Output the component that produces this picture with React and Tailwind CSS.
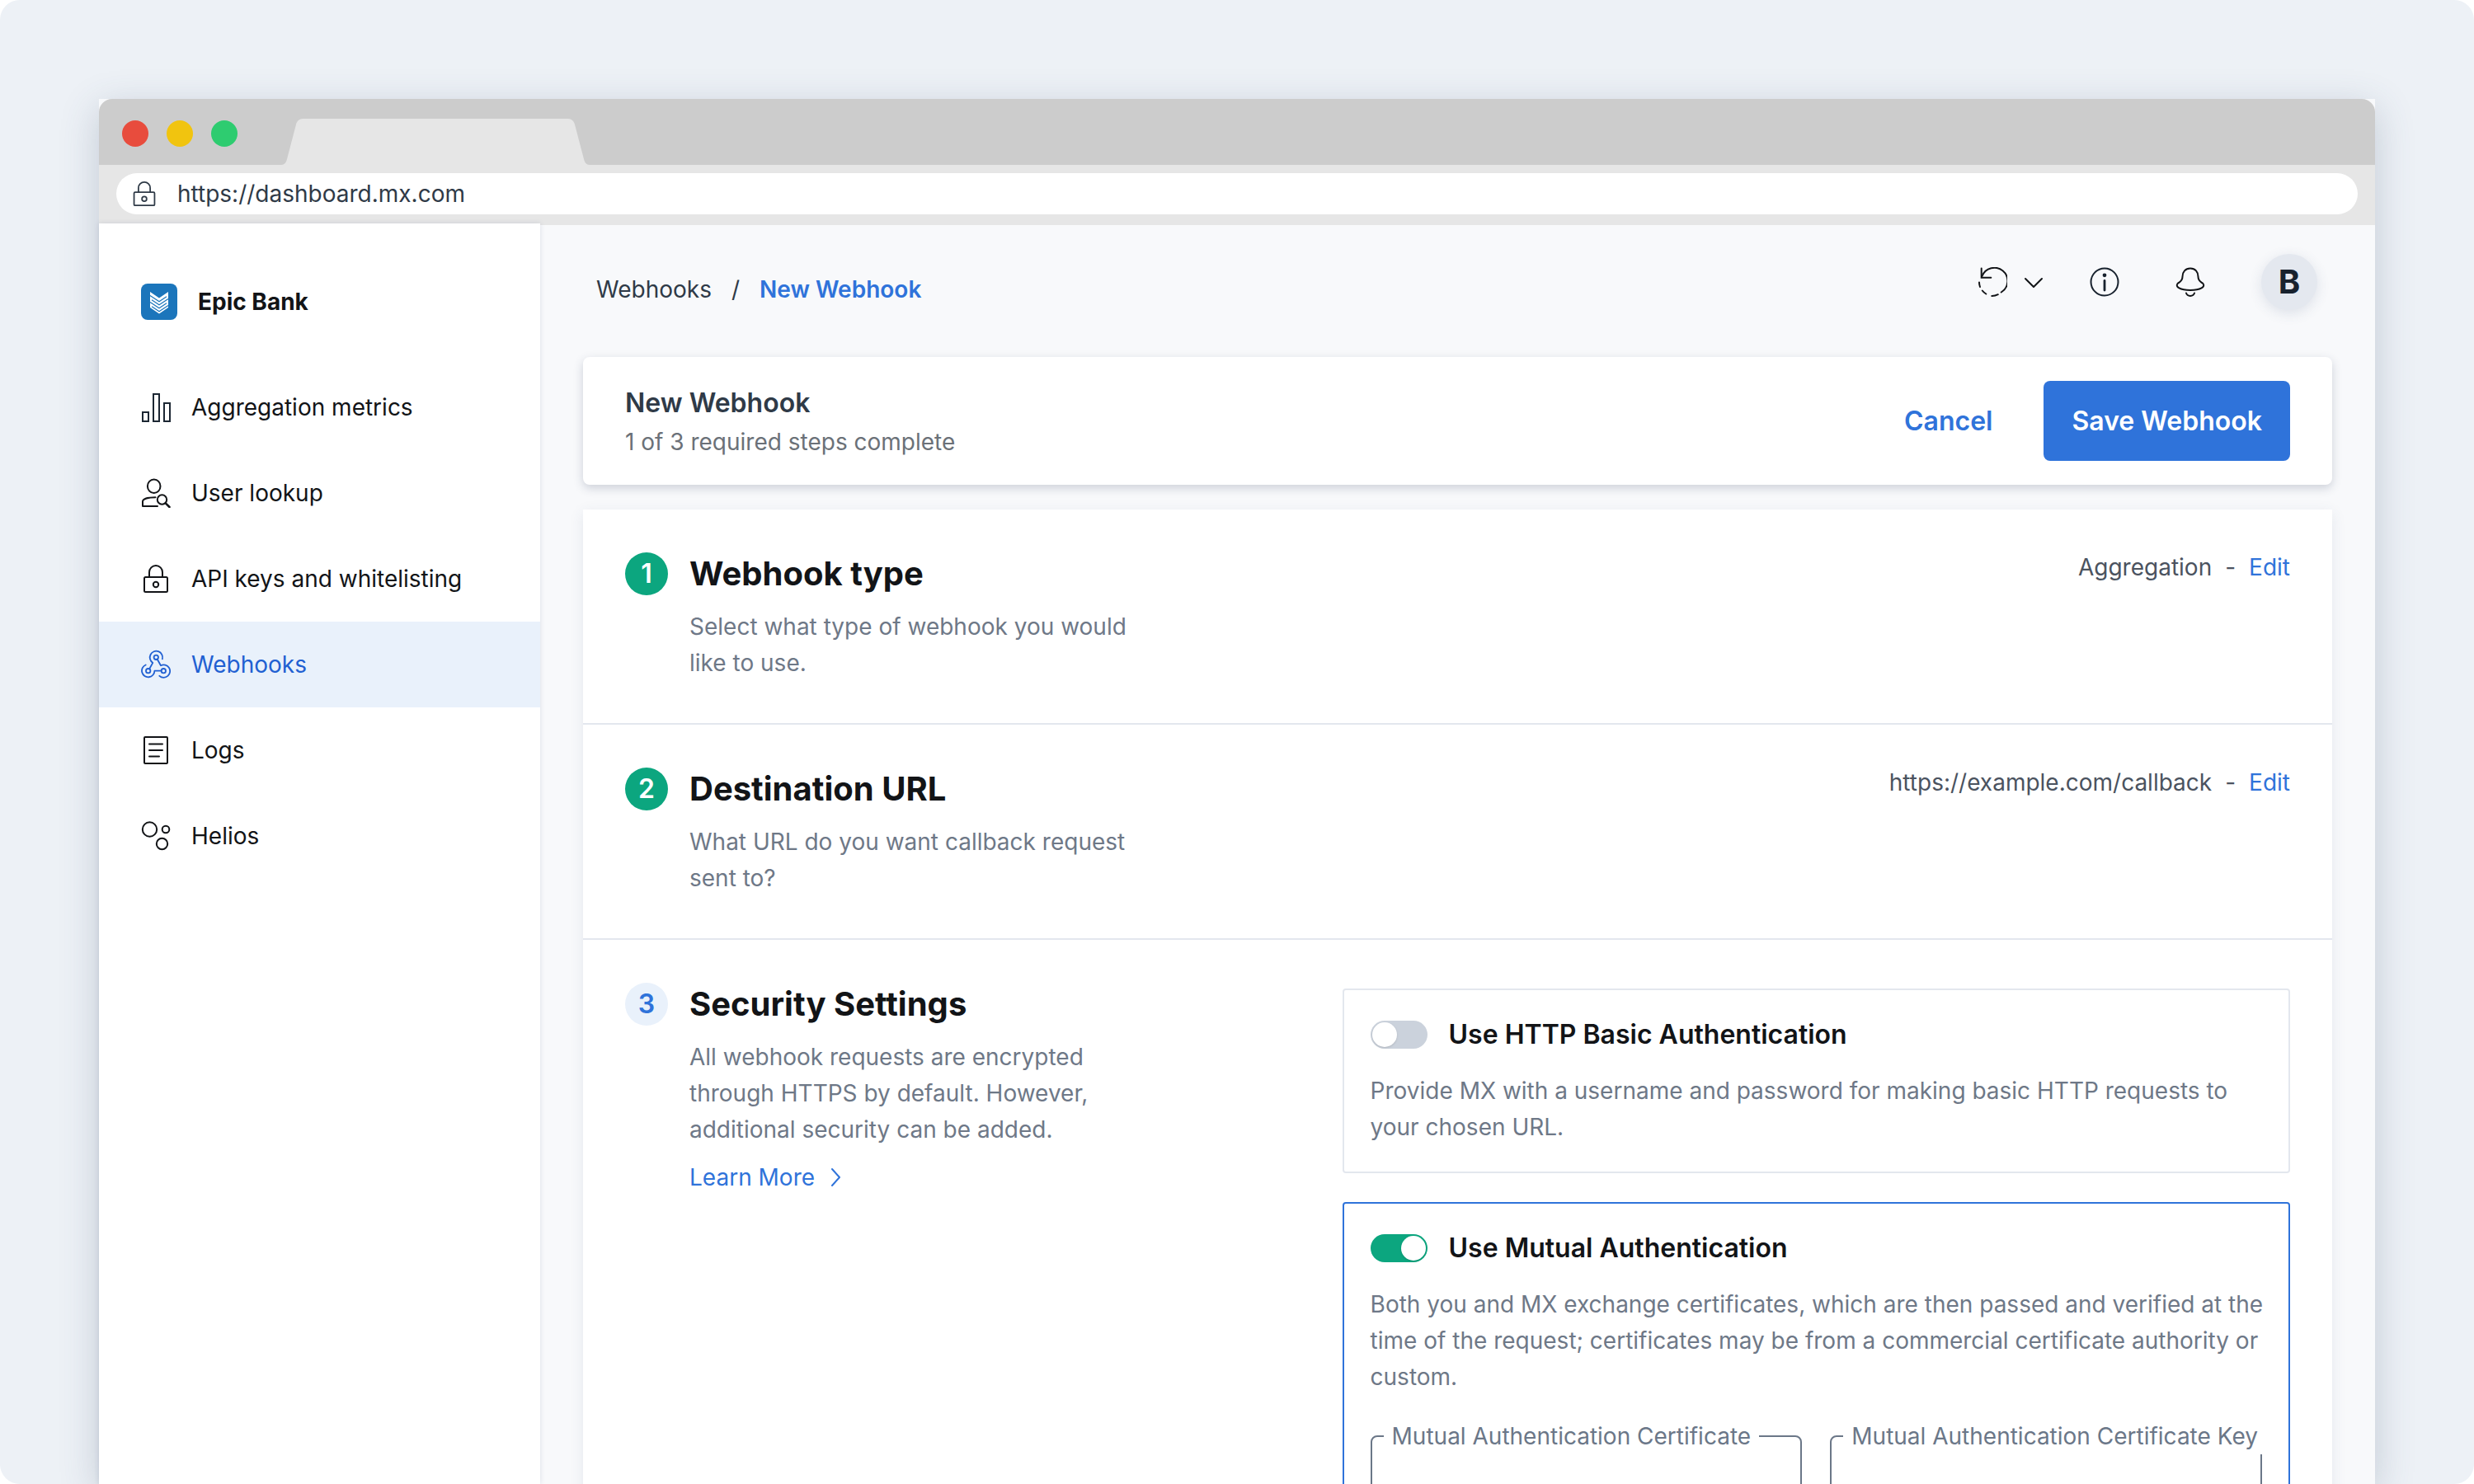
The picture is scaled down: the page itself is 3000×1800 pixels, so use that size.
function Icon({ children, className = "size-9", box = "0 0 36 36" }) {
  return (
    <svg
      viewBox={box}
      className={`${className} shrink-0`}
      fill="none"
      stroke="currentColor"
      strokeWidth="2"
      strokeLinecap="round"
      strokeLinejoin="round"
      aria-hidden="true"
    >
      {children}
    </svg>
  );
}

const LockIcon = ({ className }) => (
  <Icon className={className}>
    <rect x="4" y="16" width="28" height="18" rx="1.5" />
    <path d="M10 16V10a8 8 0 0 1 16 0v6" />
    <circle cx="18" cy="25" r="3.2" />
  </Icon>
);

const MetricsIcon = () => (
  <Icon>
    <g stroke="#1c2733" strokeLinejoin="miter">
      <rect x="2" y="24" width="7" height="11" />
      <rect x="15" y="2" width="7" height="33" />
      <rect x="28" y="13" width="7" height="22" />
    </g>
  </Icon>
);

const UserSearchIcon = () => (
  <Icon>
    <ellipse cx="15.7" cy="9.7" rx="7.8" ry="8.3" />
    <path d="M17.5 23.3C9 23.3 2 25 2 28.5V34h18" />
    <circle cx="25.5" cy="26" r="5.7" />
    <path d="M29.8 30.3 34.5 35" strokeWidth="2.5" />
  </Icon>
);

const WebhookIcon = () => (
  <Icon>
    <g strokeWidth="1.8">
      <circle cx="18.3" cy="9.3" r="2.7" />
      <circle cx="8.7" cy="25.7" r="2.7" />
      <circle cx="27.3" cy="25.7" r="2.7" />
      <path d="M25.9 11.3A7.7 7.7 0 1 0 14.3 15.9L10.2 23.2" />
      <path d="M19.8 11.8 24 19.2A7.7 7.7 0 1 1 22.3 31.8" />
      <path d="M24.4 25.7H16.4A7.7 7.7 0 1 1 5.7 18.5" />
    </g>
  </Icon>
);

const LogsIcon = () => (
  <Icon>
    <rect x="4" y="2" width="28" height="32" rx="1" />
    <path d="M10 10.5h16M10 18h16M10 25.5h12" />
  </Icon>
);

const HeliosIcon = () => (
  <Icon>
    <circle cx="10.5" cy="10" r="8.7" />
    <circle cx="30" cy="10" r="4.3" />
    <circle cx="25.5" cy="27.5" r="6.7" />
  </Icon>
);

const HistoryIcon = () => (
  <Icon>
    <path d="M4.7 1.5V12.7H16.3" strokeLinejoin="miter" />
    <path d="M5.500 11A16 16 0 1 1 28.7 30.5" />
    <path d="M2 18.5a16 16 0 0 0 1 5.5M5.8 28.5a16 16 0 0 0 4.5 4M17.3 35A16 16 0 0 0 24.8 33.2" />
  </Icon>
);

const InfoIcon = () => (
  <Icon>
    <circle cx="18" cy="18" r="16.5" />
    <circle cx="18" cy="9.8" r="1.4" fill="currentColor" />
    <path d="M18 16.5v11.5" strokeWidth="2.8" />
  </Icon>
);

const BellIcon = () => (
  <Icon>
    <path d="M18 1.5C12 1.5 8.5 6 8.5 11.5C8.5 17 5.5 17.5 2.5 20C-.5 23.8 5.5 28 18 28C30.5 28 36.5 23.8 33.5 20C30.5 17.5 27.5 17 27.5 11.5C27.5 6 24 1.5 18 1.5Z" />
    <path d="M13 31.5C14.5 36 21.5 36 23 31.5" />
  </Icon>
);

const Logo = () => (
  <svg viewBox="0 0 44 44" className="size-11 shrink-0 rounded-lg bg-[#1b75bb]" aria-hidden="true">
    <path d="M11 10 22 17.5 33 10V29L22 36.5 11 29Z" fill="#fff" />
    <path
      d="M11 14.5 22 21.7 31 15.8M13 19.7 22 25.7 33 18.5M11 22.5 22 29.7 31 23.8M13 27.7 22 33.7 33 26.5"
      fill="none"
      stroke="#1b75bb"
      strokeWidth="1.2"
    />
  </svg>
);

const navItems = [
  { label: "Aggregation metrics", icon: MetricsIcon },
  { label: "User lookup", icon: UserSearchIcon },
  { label: "API keys and whitelisting", icon: LockIcon },
  { label: "Webhooks", icon: WebhookIcon, active: true },
  { label: "Logs", icon: LogsIcon },
  { label: "Helios", icon: HeliosIcon },
];

function BrowserChrome() {
  return (
    <div className="shrink-0">
      <div className="flex h-20 items-end rounded-t-2xl bg-[#cccccc] pl-7">
        <div className="flex gap-[22px] pb-[22px]">
          <span className="size-8 rounded-full bg-[#e84c3d]" />
          <span className="size-8 rounded-full bg-[#f1c40f]" />
          <span className="size-8 rounded-full bg-[#2ecc70]" />
        </div>
        <svg viewBox="0 0 374 56" className="ml-[53px] h-14 w-[374px]" aria-hidden="true">
          <path
            d="M0 56C4 56 6 53 7 49L18 7C19 3 22 0 26 0H348C352 0 355 3 356 7L367 49C368 53 370 56 374 56Z"
            fill="#e6e6e6"
          />
        </svg>
      </div>
      <div className="bg-[#e6e6e6] px-[21px] pt-2.5 pb-[11px]">
        <div className="flex h-[50px] items-center gap-6 rounded-full bg-white pl-[18px] text-[#2f3a47]">
          <LockIcon className="size-8" />
          <input
            aria-label="Address"
            defaultValue="https://dashboard.mx.com"
            className="h-11 min-w-0 flex-1 bg-transparent outline-none"
          />
        </div>
      </div>
    </div>
  );
}

function Sidebar() {
  return (
    <aside className="z-10 w-[535px] shrink-0 bg-white pt-[73px] shadow-[0_0_6px_rgba(60,80,120,0.16)]">
      <div className="flex items-center gap-[25px] pl-[51px]">
        <Logo />
        <span className="font-bold">Epic Bank</span>
      </div>
      <nav className="mt-[54px]">
        {navItems.map(({ label, icon: NavIcon, active }) => (
          <a
            key={label}
            href="#"
            aria-current={active ? "page" : undefined}
            className={`flex h-[104px] items-center gap-[25px] pl-[51px] ${
              active ? "bg-[#e9f1fb] text-[#2160d2]" : ""
            }`}
          >
            <NavIcon />
            {label}
          </a>
        ))}
      </nav>
    </aside>
  );
}

function Header() {
  return (
    <header className="flex items-start justify-between pt-[35px] pr-[18px] pb-[57px] pl-4">
      <nav aria-label="Breadcrumb" className="mt-[21px] flex gap-6 text-[#2f3a47]">
        <a href="#">Webhooks</a>
        <span>/</span>
        <a href="#" aria-current="page" className="font-semibold text-[#2f73da]">
          New Webhook
        </a>
      </nav>
      <div className="flex items-center gap-14">
        <button type="button" aria-label="History" className="flex items-center gap-5">
          <HistoryIcon />
          <Icon className="size-6" box="0 0 24 24">
            <path d="M2 8 12 18 22 8" />
          </Icon>
        </button>
        <button type="button" aria-label="Information" className="text-[#18222e]">
          <InfoIcon />
        </button>
        <button type="button" aria-label="Notifications" className="ml-3">
          <BellIcon />
        </button>
        <button
          type="button"
          aria-label="Account"
          className="ml-3 size-[68px] rounded-full bg-[#e4e8ef] text-[40px] font-bold text-[#18222e] shadow-[0_4px_16px_rgba(60,80,120,0.14)]"
        >
          B
        </button>
      </div>
    </header>
  );
}

function ActionBar() {
  return (
    <div className="flex items-center justify-between rounded-lg bg-white px-[51px] py-[29px] shadow-[0_4px_12px_rgba(50,65,95,0.22)]">
      <div>
        <h1 className="text-[32px] leading-[50px] font-semibold text-[#2f3a47]">New Webhook</h1>
        <p className="text-[#6b7178]">1 of 3 required steps complete</p>
      </div>
      <div className="flex items-center gap-[62px] text-[32px] font-semibold">
        <button type="button" className="text-[#2f73da]">
          Cancel
        </button>
        <button type="button" className="h-[97px] rounded-lg bg-[#2f73da] px-[34px] text-white">
          Save Webhook
        </button>
      </div>
    </div>
  );
}

function StepIntro({ number, title, done, children }) {
  return (
    <div className="flex gap-[26px] pt-1">
      <span
        className={`flex size-[52px] shrink-0 items-center justify-center rounded-full text-[32px] font-semibold ${
          done ? "bg-[#0ca67f] text-white" : "bg-[#e9f1fb] text-[#2f73da]"
        }`}
      >
        {number}
      </span>
      <div className="max-w-[560px]">
        <h2 className="text-[40px] leading-[52px] font-bold">{title}</h2>
        {children}
      </div>
    </div>
  );
}

function CompletedStep({ number, title, description, value }) {
  return (
    <section className="flex justify-between border-b-2 border-[#e3e7ee] px-[51px] pt-12 pb-[51px]">
      <StepIntro number={number} title={title} done>
        <p className="mt-4 text-[#6e7887]">{description}</p>
      </StepIntro>
      <p className="flex gap-4 text-[#4b535f]">
        {value}
        <span>-</span>
        <a href="#" className="text-[#2f73da]">
          Edit
        </a>
      </p>
    </section>
  );
}

function ToggleCard({ id, title, description, on, children }) {
  return (
    <div className={`rounded border-2 py-8 pr-6 pl-8 ${on ? "border-[#2f73da]" : "border-[#e3e7ee]"}`}>
      <div className="flex items-center gap-[26px]">
        <input
          id={id}
          type="checkbox"
          role="switch"
          defaultChecked={on}
          className="flex h-[34px] w-[69px] appearance-none items-center rounded-full bg-[#cbd2dc] px-0.5 before:size-[30px] before:rounded-full before:bg-white before:shadow-sm checked:justify-end checked:bg-[#0ca67f]"
        />
        <label htmlFor={id} className="text-[32px] leading-[44px] font-semibold">
          {title}
        </label>
      </div>
      <p className="mt-6 text-[#6e7887]">{description}</p>
      {children}
    </div>
  );
}

function CertificateField({ id, label }) {
  return (
    <fieldset className="min-w-0 rounded-lg border-2 border-[#6b7788] pl-3.5 text-[#6b7788]">
      <legend className="px-2.5 whitespace-nowrap">
        <label htmlFor={id}>{label}</label>
      </legend>
      <textarea id={id} rows={4} className="block w-full resize-none bg-transparent outline-none" />
    </fieldset>
  );
}

function SecurityStep() {
  return (
    <section className="grid grid-cols-[87fr_115fr] items-start px-[51px] pt-12 pb-[51px]">
      <StepIntro number={3} title="Security Settings">
        <p className="mt-4 text-[#6e7887]">
          All webhook requests are encrypted through HTTPS by default. However, additional security can be added.
        </p>
        <a href="#" className="mt-3.5 flex items-center gap-3.5 text-[#2f73da]">
          Learn More
          <Icon className="size-6" box="0 0 24 24">
            <path d="M7 2 16 12 7 22" />
          </Icon>
        </a>
      </StepIntro>
      <div className="mt-[11px] flex min-w-0 flex-col gap-[35px]">
        <ToggleCard
          id="basic-auth"
          title="Use HTTP Basic Authentication"
          description="Provide MX with a username and password for making basic HTTP requests to your chosen URL."
        />
        <ToggleCard
          id="mutual-auth"
          title="Use Mutual Authentication"
          description="Both you and MX exchange certificates, which are then passed and verified at the time of the request; certificates may be from a commercial certificate authority or custom."
          on
        >
          <div className="mt-7 grid grid-cols-2 gap-[34px] pr-2">
            <CertificateField id="certificate" label="Mutual Authentication Certificate" />
            <CertificateField id="certificate-key" label="Mutual Authentication Certificate Key" />
          </div>
        </ToggleCard>
      </div>
    </section>
  );
}

export default function App() {
  return (
    <div className="flex h-screen flex-col overflow-hidden rounded-3xl bg-[#edf1f6] px-[120px] pt-[120px] font-['Inter',sans-serif] text-[28px] leading-[44px] text-[#121417]">
      <div className="flex min-h-0 flex-1 flex-col bg-[#f8f9fb] shadow-[0_12px_44px_rgba(60,80,110,0.24)]">
        <BrowserChrome />
        <div className="flex min-h-0 flex-1">
          <Sidebar />
          <main className="min-w-0 flex-1 overflow-hidden border-t-2 border-[#e6e6e6] px-[52px]">
            <Header />
            <ActionBar />
            <div className="mt-[30px] bg-white shadow-[0_4px_16px_rgba(60,80,120,0.1)]">
              <CompletedStep
                number={1}
                title="Webhook type"
                description="Select what type of webhook you would like to use."
                value="Aggregation"
              />
              <CompletedStep
                number={2}
                title="Destination URL"
                description="What URL do you want callback request sent to?"
                value="https://example.com/callback"
              />
              <SecurityStep />
            </div>
          </main>
        </div>
      </div>
    </div>
  );
}
